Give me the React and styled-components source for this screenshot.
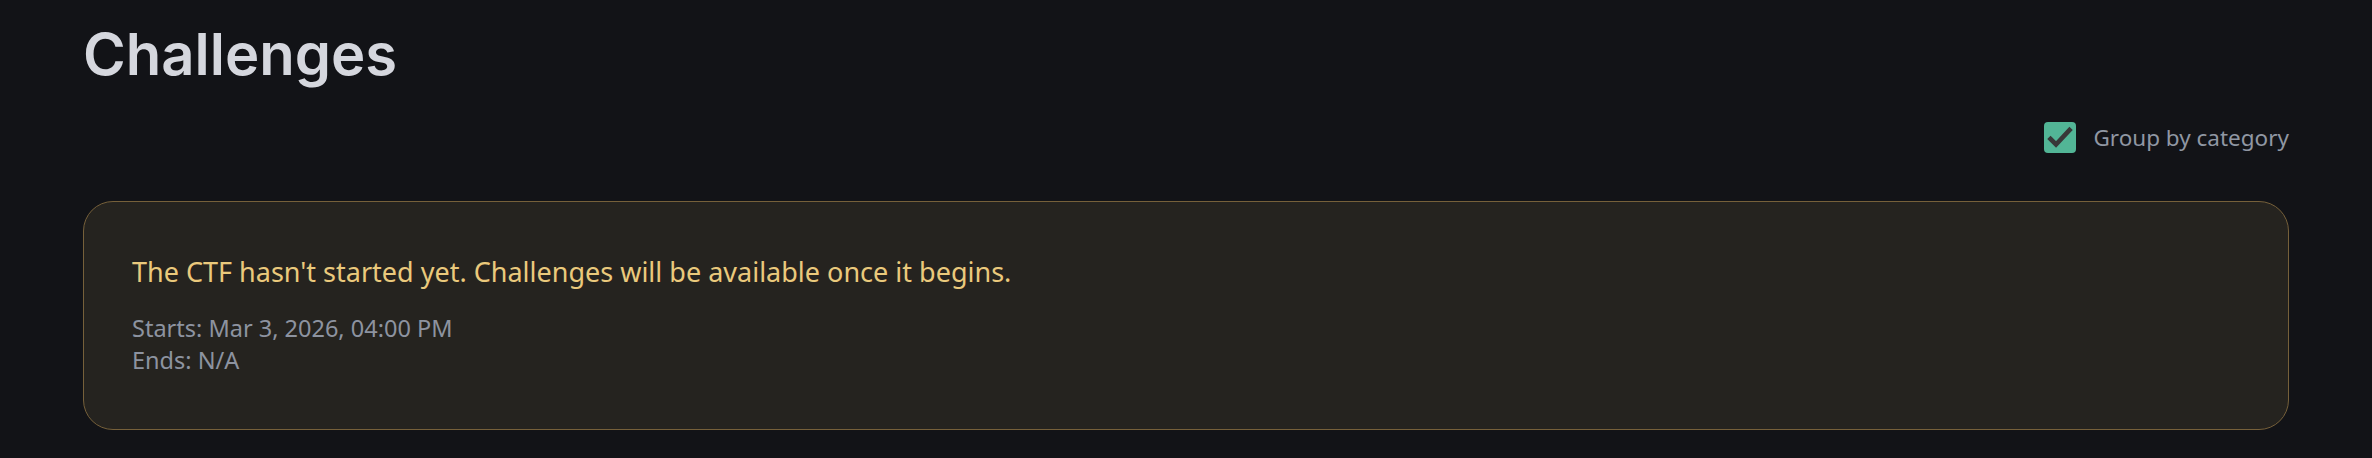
import styled, { createGlobalStyle } from 'styled-components';

const GlobalStyle = createGlobalStyle`
body {
  margin:0;
  background-color:#121317;
  font-family:"Noto Sans", "Liberation Sans", sans-serif;
}
`

function Checkbox({ checked }) {
    return (
        <Check_box checked={checked}>
            {checked && (
                <svg width="32" height="32" viewBox="0 0 32 32">
                    <path d="M6.5 17 L12 22.5 L25.5 8" fill="none" stroke="#383838" strokeWidth="4.6" strokeLinecap="square" />
                </svg>
            )}
        </Check_box>
    )
}

function App() {
    return (
        <Page>
            <GlobalStyle />
            <Title>Challenges</Title>
            <Toolbar>
                <Group_toggle>
                    <Checkbox checked />
                    <Toggle_label>Group by category</Toggle_label>
                </Group_toggle>
            </Toolbar>
            <Notice_card>
                <Notice_text>The CTF hasn't started yet. Challenges will be available once it begins.</Notice_text>
                <Schedule>
                    <div>Starts: Mar 3, 2026, 04:00 PM</div>
                    <div>Ends: N/A</div>
                </Schedule>
            </Notice_card>
        </Page>
    )
}

const Page = styled.div`
padding:19px 83px 0;
`
const Title = styled.h1`
margin:0;
font-family:Inter, "Noto Sans", sans-serif;
font-weight:600;
font-size:58px;
line-height:70px;
letter-spacing:0;
color:#d5d7de;
`
const Toolbar = styled.div`
display:flex;
justify-content:flex-end;
margin-top:33px;
`
const Group_toggle = styled.label`
display:flex;
align-items:center;
gap:17px;
`
const Check_box = styled.span`
display:flex;
width:32px;
height:31px;
border-radius:4px;
background-color:${props => props.checked ? "#52b596" : "transparent"};
`
const Toggle_label = styled.span`
font-size:22.5px;
color:#9097a3;
`
const Notice_card = styled.div`
margin-top:48px;
padding:50px 48px 53px;
background-color:#25231f;
border:1.5px solid #76603a;
border-radius:30px;
`
const Notice_text = styled.p`
margin:0;
font-size:27px;
line-height:40px;
color:#eac97c;
`
const Schedule = styled.div`
margin-top:20px;
font-size:23.5px;
line-height:32px;
color:#8d93a0;
`
export default App;
